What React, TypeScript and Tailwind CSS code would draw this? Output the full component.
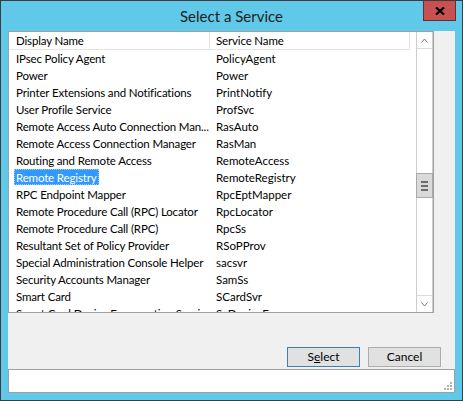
const services = [
  { name: "IPsec Policy Agent", id: "PolicyAgent" },
  { name: "Power", id: "Power" },
  { name: "Printer Extensions and Notifications", id: "PrintNotify" },
  { name: "User Profile Service", id: "ProfSvc" },
  { name: "Remote Access Auto Connection Man...", id: "RasAuto" },
  { name: "Remote Access Connection Manager", id: "RasMan" },
  { name: "Routing and Remote Access", id: "RemoteAccess" },
  { name: "Remote Registry", id: "RemoteRegistry" },
  { name: "RPC Endpoint Mapper", id: "RpcEptMapper" },
  { name: "Remote Procedure Call (RPC) Locator", id: "RpcLocator" },
  { name: "Remote Procedure Call (RPC)", id: "RpcSs" },
  { name: "Resultant Set of Policy Provider", id: "RSoPProv" },
  { name: "Special Administration Console Helper", id: "sacsvr" },
  { name: "Security Accounts Manager", id: "SamSs" },
  { name: "Smart Card", id: "SCardSvr" },
  { name: "Smart Card Device Enumeration Service", id: "ScDeviceEnum" },
];

const selected = "RemoteRegistry";

function ScrollBar() {
  return (
    <div className="flex w-[17px] flex-col border-x border-[#cdcdcd] bg-white">
      <div className="flex h-[17px] items-center justify-center border-b border-[#dcdcdc]">
        <svg width="7" height="5" viewBox="0 0 7 5">
          <path d="M0.5 4.5 L3.5 1 L6.5 4.5" fill="none" stroke="#7a7a7a" strokeWidth="1" />
        </svg>
      </div>
      <div className="flex-1 pt-[124px]">
        <div className="-mx-px flex h-[25px] flex-col items-center justify-center gap-[2px] border border-[#a9a9a9] bg-[#dadada]">
          <div className="h-[2px] w-[7px] bg-[#6d6d6d]" />
          <div className="h-[2px] w-[7px] bg-[#6d6d6d]" />
          <div className="h-[2px] w-[7px] bg-[#6d6d6d]" />
        </div>
      </div>
      <div className="flex h-[17px] items-center justify-center border-t border-[#dcdcdc]">
        <svg width="7" height="5" viewBox="0 0 7 5">
          <path d="M0.5 0.5 L3.5 4 L6.5 0.5" fill="none" stroke="#7a7a7a" strokeWidth="1" />
        </svg>
      </div>
    </div>
  );
}

function ServiceList() {
  return (
    <div className="flex h-[282px] w-[426px] border border-[#a0a0a0] bg-white text-[11.5px]">
      <div className="flex flex-1 flex-col overflow-hidden">
        <div className="flex h-[18px] shrink-0 items-center leading-[17px]">
          <div className="h-full w-[201px] border-r border-b border-[#e5e5e5] pl-[7px] tracking-[-0.15px]">Display Name</div>
          <div className="h-full w-[200px] border-r border-b border-[#e5e5e5] pl-[6px] tracking-[-0.15px]">Service Name</div>
        </div>
        <div className="flex-1 overflow-hidden">
          {services.map((s) => {
            const active = s.id === selected;
            return (
              <div key={s.id} className="flex h-[17px] items-center leading-[16px]">
                <div className="w-[201px] overflow-hidden whitespace-nowrap pl-[5px] tracking-[-0.15px]">
                  <span className={active ? "inline-block h-[16px] border border-dotted border-[#99c9ff] bg-[#3399ff] px-[1px] text-white" : "inline-block px-[2px]"}>
                    {s.name}
                  </span>
                </div>
                <div className="w-[200px] whitespace-nowrap pl-[6px]">{s.id}</div>
              </div>
            );
          })}
        </div>
      </div>
      <ScrollBar />
    </div>
  );
}

function SizeGrip() {
  const dots = [
    [6, 0],
    [6, 3],
    [3, 3],
    [6, 6],
    [3, 6],
    [0, 6],
  ];
  return (
    <svg width="8" height="8" viewBox="0 0 8 8">
      {dots.map(([x, y]) => (
        <rect key={`${x}-${y}`} x={x} y={y} width="2" height="2" fill="#b4b4b4" />
      ))}
    </svg>
  );
}

export default function App() {
  return (
    <div
      className="relative flex h-[401px] w-[463px] flex-col border border-[#3c3c3c] bg-[#60c8e9] px-[7px] pb-[7px] text-[12px] text-black"
      style={{ fontFamily: "Lato, 'Liberation Sans', sans-serif" }}
    >
      <div className="flex h-[30px] items-center justify-center text-[15px] text-[#1e1e1e]">Select a Service</div>
      <div className="absolute top-0 right-[6px] flex h-[20px] w-[33px] items-center justify-center border-x border-b border-[#5a3434] bg-[#c75050]">
        <svg width="10" height="8" viewBox="0 0 10 8">
          <path d="M1 0.5 L9 7.5 M9 0.5 L1 7.5" stroke="#000" strokeWidth="2.2" />
        </svg>
      </div>
      <div className="flex flex-1 flex-col bg-[#f0f0f0]">
        <ServiceList />
        <div className="mt-[34px] flex justify-end gap-[8px] pr-[14px]">
          <button className="h-[20px] w-[73px] border border-[#3c7fb1] bg-[#e1e1e1] text-[12px] leading-[18px]">
            S<span className="underline">e</span>lect
          </button>
          <button className="h-[20px] w-[73px] border border-[#adadad] bg-[#e1e1e1] text-[12px] leading-[18px]">Cancel</button>
        </div>
        <div className="mt-[2px] flex h-[24px] items-end justify-end border border-[#a0a0a0] bg-white p-[2px]">
          <SizeGrip />
        </div>
      </div>
    </div>
  );
}
